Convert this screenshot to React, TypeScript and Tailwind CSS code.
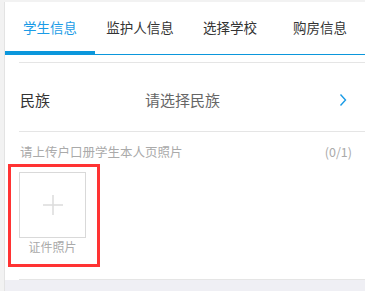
const tabs = ["学生信息", "监护人信息", "选择学校", "购房信息"];

function Chevron() {
  return (
    <svg width="8" height="14" viewBox="0 0 8 14" fill="none">
      <path d="M1.5 1.5 L6.5 7 L1.5 12.5" stroke="#1a9be6" strokeWidth="1.4" />
    </svg>
  );
}

function Plus() {
  return (
    <svg width="22" height="22" viewBox="0 0 22 22">
      <path d="M11 1 V21 M1 11 H21" stroke="#dcdcdc" strokeWidth="1.5" />
    </svg>
  );
}

export default function App() {
  return (
    <div
      className="flex h-[291px] w-[365px] flex-col overflow-hidden bg-[#f2f2f2] pt-[2px] pl-[4px]"
      style={{ fontFamily: '"Noto Sans CJK SC", "Noto Sans", sans-serif' }}
    >
      <div className="flex flex-1 flex-col border-l border-[#e3e3e3] bg-white">
        {/* tabs */}
        <div className="flex h-[53px] border-b border-[#0b97dc]">
          {tabs.map((t, i) => (
            <div
              key={t}
              className={`relative flex w-[90px] items-center justify-center pb-[2px] text-[13.5px] ${
                i === 0 ? "text-[#1a9be6]" : "text-[#333]"
              }`}
            >
              {t}
              {i === 0 && (
                <span className="absolute right-0 bottom-[-1px] left-0 h-[4px] bg-[#0b97dc]" />
              )}
            </div>
          ))}
        </div>

        <div className="mt-[7px] ml-[14px] border-t border-[#e5e5e5]">
          <div className="flex h-[68px] items-center pt-[6px] pr-[18px] pl-[1px] text-[15px]">
            <span className="w-[125px] text-[#333]">民族</span>
            <span className="flex-1 text-[#666]">请选择民族</span>
            <Chevron />
          </div>
          <div className="border-t border-[#e5e5e5]" />
        </div>

        <div className="flex items-center justify-between pt-[11px] pr-[13px] pl-[15px] text-[12.5px] leading-[17px] text-[#aaa]">
          <span>请上传户口册学生本人页照片</span>
          <span>(0/1)</span>
        </div>

        <div className="mt-[4px] ml-[3px] w-[92px] border-[3px] border-[#ff3333] pt-[5px] pr-[11px] pb-[9px] pl-[8px]">
          <div className="flex h-[66px] w-[67px] items-center justify-center border border-[#d9d9d9]">
            <Plus />
          </div>
          <div className="text-center text-[12px] leading-[17px] text-[#aaa]">证件照片</div>
        </div>

        <div className="mt-[12px] ml-[14px] border-b border-[#e5e5e5]" />
        <div className="flex-1 bg-[#efeff4]" />
      </div>
    </div>
  );
}
